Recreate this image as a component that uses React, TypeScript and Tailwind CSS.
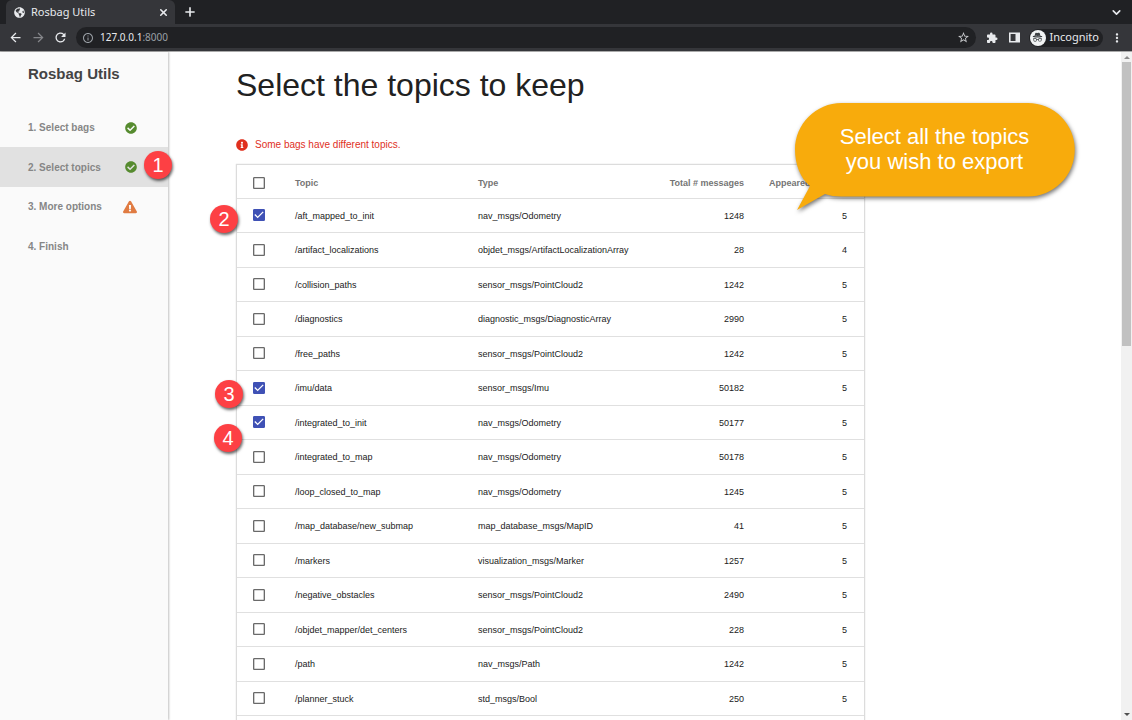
import { useState } from "react";
import {
  MdArrowBack,
  MdArrowForward,
  MdCheckBox,
  MdCheckBoxOutlineBlank,
  MdExtension,
  MdInfoOutline,
  MdMoreVert,
  MdRefresh,
  MdStarBorder,
} from "react-icons/md";
import { FaCheckCircle, FaExclamationTriangle, FaGlobeAmericas, FaInfoCircle } from "react-icons/fa";
import { BsIncognito } from "react-icons/bs";
import { ChevronDown, Plus, X } from "lucide-react";

type Topic = { name: string; type: string; messages: number; bags: number; keep?: boolean };

const topics: Topic[] = [
  { name: "/aft_mapped_to_init", type: "nav_msgs/Odometry", messages: 1248, bags: 5, keep: true },
  { name: "/artifact_localizations", type: "objdet_msgs/ArtifactLocalizationArray", messages: 28, bags: 4 },
  { name: "/collision_paths", type: "sensor_msgs/PointCloud2", messages: 1242, bags: 5 },
  { name: "/diagnostics", type: "diagnostic_msgs/DiagnosticArray", messages: 2990, bags: 5 },
  { name: "/free_paths", type: "sensor_msgs/PointCloud2", messages: 1242, bags: 5 },
  { name: "/imu/data", type: "sensor_msgs/Imu", messages: 50182, bags: 5, keep: true },
  { name: "/integrated_to_init", type: "nav_msgs/Odometry", messages: 50177, bags: 5, keep: true },
  { name: "/integrated_to_map", type: "nav_msgs/Odometry", messages: 50178, bags: 5 },
  { name: "/loop_closed_to_map", type: "nav_msgs/Odometry", messages: 1245, bags: 5 },
  { name: "/map_database/new_submap", type: "map_database_msgs/MapID", messages: 41, bags: 5 },
  { name: "/markers", type: "visualization_msgs/Marker", messages: 1257, bags: 5 },
  { name: "/negative_obstacles", type: "sensor_msgs/PointCloud2", messages: 2490, bags: 5 },
  { name: "/objdet_mapper/det_centers", type: "sensor_msgs/PointCloud2", messages: 228, bags: 5 },
  { name: "/path", type: "nav_msgs/Path", messages: 1242, bags: 5 },
  { name: "/planner_stuck", type: "std_msgs/Bool", messages: 250, bags: 5 },
];

const steps = [
  { label: "1. Select bags", status: "done" },
  { label: "2. Select topics", status: "done", active: true },
  { label: "3. More options", status: "warning" },
  { label: "4. Finish", status: "none" },
];

function BrowserBar() {
  return (
    <header className="shrink-0 bg-[#202124] font-['Noto_Sans',sans-serif] text-[11px] text-[#e8eaed]">
      <div className="flex h-6 items-center">
        <div className="ml-[6px] flex h-full w-[169px] items-center rounded-t-md bg-[#35363a] pl-2 pr-[6px]">
          <FaGlobeAmericas className="size-[11px]" />
          <span className="ml-[6px] flex-1">Rosbag Utils</span>
          <button aria-label="Close tab">
            <X className="size-[11px]" strokeWidth={3.5} />
          </button>
        </div>
        <button aria-label="New tab" className="ml-2">
          <Plus className="size-[14px]" strokeWidth={2.8} />
        </button>
        <button aria-label="Search tabs" className="ml-auto mr-[9px]">
          <ChevronDown className="size-[13px]" strokeWidth={3} />
        </button>
      </div>
      <div className="flex h-7 items-center border-b border-[#aaaaaa] bg-[#35363a] pl-2 pr-2">
        <button aria-label="Back">
          <MdArrowBack className="size-[15px]" />
        </button>
        <button aria-label="Forward" className="ml-2 text-[#85868a]">
          <MdArrowForward className="size-[15px]" />
        </button>
        <button aria-label="Reload" className="ml-[7px]">
          <MdRefresh className="size-[15px]" />
        </button>
        <div className="ml-2 flex h-[21px] flex-1 items-center rounded-full bg-[#202124] pl-[6px] pr-[6px] text-[10px]">
          <MdInfoOutline className="size-3 text-[#9aa0a6]" />
          <span className="ml-[6px] flex-1">
            127.0.0.1<span className="text-[#9aa0a6]">:8000</span>
          </span>
          <button aria-label="Bookmark this page">
            <MdStarBorder className="size-[13px] text-[#c8cacd]" />
          </button>
        </div>
        <button aria-label="Extensions" className="ml-[10px]">
          <MdExtension className="size-3" />
        </button>
        <button aria-label="Side panel" className="ml-[11px]">
          <svg viewBox="0 0 11 11" className="size-[11px]" fill="currentColor">
            <path fillRule="evenodd" d="M0 .5h11v10H0zM1.600 2v7H6.500V2z" />
          </svg>
        </button>
        <button className="ml-[9px] flex h-[18px] items-center rounded-full bg-[#202124] pl-px pr-1">
          <span className="grid size-4 place-items-center rounded-full bg-[#f1f3f4] text-[#3c4043]">
            <BsIncognito className="size-[11px]" />
          </span>
          <span className="ml-1">Incognito</span>
        </button>
        <button aria-label="Menu" className="ml-[7px]">
          <MdMoreVert className="size-[14px]" />
        </button>
      </div>
    </header>
  );
}

function StepIcon({ status }: { status: string }) {
  if (status === "done") return <FaCheckCircle className="size-3 text-[#568b2f]" />;
  if (status === "warning") return <FaExclamationTriangle className="size-[14px] text-[#e07b42]" />;
  return null;
}

function Sidebar() {
  return (
    <nav className="z-10 w-[168px] shrink-0 bg-[#fafafa] shadow-[1px_0_2px_rgba(0,0,0,0.25)]">
      <h2 className="pl-7 pt-3 text-[15px] leading-5 font-bold text-[#444444]">Rosbag Utils</h2>
      <ul className="mt-6">
        {steps.map((s) => (
          <li key={s.label} className="h-[39px] even:h-10">
            <a
              href="#"
              className={
                "flex h-full items-center justify-between pl-7 pr-[31px] text-[10px] font-bold text-[#868686]" +
                (s.active ? " bg-[#e1e1e1]" : "")
              }
            >
              {s.label}
              <StepIcon status={s.status} />
            </a>
          </li>
        ))}
      </ul>
    </nav>
  );
}

function Check({ label, checked, onChange }: { label: string; checked: boolean; onChange: () => void }) {
  return (
    <label className="relative ml-[14px] block size-4 cursor-pointer">
      <input
        type="checkbox"
        aria-label={label}
        checked={checked}
        onChange={onChange}
        className="absolute inset-0 size-4 cursor-pointer opacity-0"
      />
      {checked ? (
        <MdCheckBox className="size-4 text-[#3f51b5]" />
      ) : (
        <MdCheckBoxOutlineBlank className="size-4 text-[#6a6a6a]" />
      )}
    </label>
  );
}

function TopicTable() {
  const [kept, setKept] = useState(() => topics.filter((t) => t.keep).map((t) => t.name));
  const all = kept.length === topics.length;
  const toggle = (name: string) =>
    setKept((k) => (k.includes(name) ? k.filter((n) => n !== name) : [...k, name]));

  return (
    <div className="mt-[11px] w-full max-w-[629px] border border-[#dcdcdc] shadow-[0_0_1px_rgba(0,0,0,0.2)]">
      <table className="w-full table-fixed border-collapse text-[9px] text-[#212121]">
        <colgroup>
          <col className="w-[46px]" />
          <col className="w-[183px]" />
          <col />
          <col className="w-24" />
          <col className="w-[108px]" />
        </colgroup>
        <thead>
          <tr className="h-[33px] border-b border-[#e0e0e0] text-[#757575]">
            <th className="p-0 pt-[3px]">
              <Check label="All topics" checked={all} onChange={() => setKept(all ? [] : topics.map((t) => t.name))} />
            </th>
            <th className="px-3 py-0 pt-1 text-left">Topic</th>
            <th className="px-3 py-0 pt-1 text-left">Type</th>
            <th className="pt-1 pr-3 pb-0 pl-0 text-right whitespace-nowrap">Total # messages</th>
            <th className="pt-1 pr-3 pb-0 pl-0 text-right whitespace-nowrap">Appeared in # bags</th>
          </tr>
        </thead>
        <tbody>
          {topics.map((t) => (
            <tr key={t.name} className="h-[34px] border-b border-[#e0e0e0] even:h-[35px]">
              <td className="p-0">
                <Check label={t.name} checked={kept.includes(t.name)} onChange={() => toggle(t.name)} />
              </td>
              <td className="px-3 pt-[3px] pb-0">{t.name}</td>
              <td className="px-3 pt-[3px] pb-0">{t.type}</td>
              <td className="px-3 pt-[3px] pb-0 text-right">{t.messages}</td>
              <td className="pt-[3px] pr-[17px] pb-0 text-right">{t.bags}</td>
            </tr>
          ))}
          <tr className="h-[34px]">
            <td colSpan={5} />
          </tr>
        </tbody>
      </table>
    </div>
  );
}

function Scrollbar() {
  return (
    <div className="flex w-[11px] shrink-0 flex-col items-center justify-between bg-[#f1f1f1] py-1" aria-hidden="true">
      <svg viewBox="0 0 6 3" className="h-[3px] w-[6px]" fill="#8b8b8b">
        <path d="M0 3 3 0l3 3z" />
      </svg>
      <div className="mt-[3px] h-[284px] w-[9px] bg-[#c1c1c1]" />
      <svg viewBox="0 0 6 3" className="mt-auto h-[3px] w-[6px]" fill="#505050">
        <path d="M0 0h6L3 3z" />
      </svg>
    </div>
  );
}

const markers = [
  { n: 1, place: "left-[144px] top-[151px]" },
  { n: 2, place: "left-[210px] top-[205px]" },
  { n: 3, place: "left-[215px] top-[380px]" },
  { n: 4, place: "left-[214px] top-[424px]" },
];

function Annotations() {
  return (
    <div className="pointer-events-none absolute inset-0 z-20 text-white">
      {markers.map((m) => (
        <span
          key={m.n}
          className={
            "absolute grid size-7 place-items-center rounded-full bg-[#fd4044] text-[20px] leading-none shadow-[1px_2px_3px_rgba(0,0,0,0.6)] " +
            m.place
          }
        >
          {m.n}
        </span>
      ))}
      <div className="absolute top-[102px] left-[794px] w-[281px]">
        <svg
          viewBox="0 0 281 110"
          className="w-[281px] overflow-visible drop-shadow-[1px_2px_2px_rgba(0,0,0,0.55)]"
          fill="#f8ab0c"
        >
          <path d="M47.500 1H234a46.500 46.500 0 0 1 0 93.500H47.500Q38 94.500 31 92L3 108 16 84C6 76 1 62 1 47.500 1 22 22 1 47.500 1z" />
        </svg>
        <p className="absolute inset-x-0 top-[22px] text-center text-[22px] leading-[25px]">
          Select all the topics
          <br />
          you wish to export
        </p>
      </div>
    </div>
  );
}

export default function App() {
  return (
    <div className="relative flex h-screen flex-col overflow-hidden bg-white font-['Liberation_Sans',Arial,sans-serif]">
      <BrowserBar />
      <div className="flex min-h-0 flex-1">
        <Sidebar />
        <main className="min-w-0 flex-1 overflow-hidden pl-[68px]">
          <h1 className="pt-[13px] text-[32px] leading-10 text-[#212121]">Select the topics to keep</h1>
          <p className="mt-8 flex items-center text-[10px] leading-4 text-[#e0301e]">
            <FaInfoCircle className="mr-[7px] size-3" />
            Some bags have different topics.
          </p>
          <TopicTable />
        </main>
        <Scrollbar />
      </div>
      <Annotations />
    </div>
  );
}
